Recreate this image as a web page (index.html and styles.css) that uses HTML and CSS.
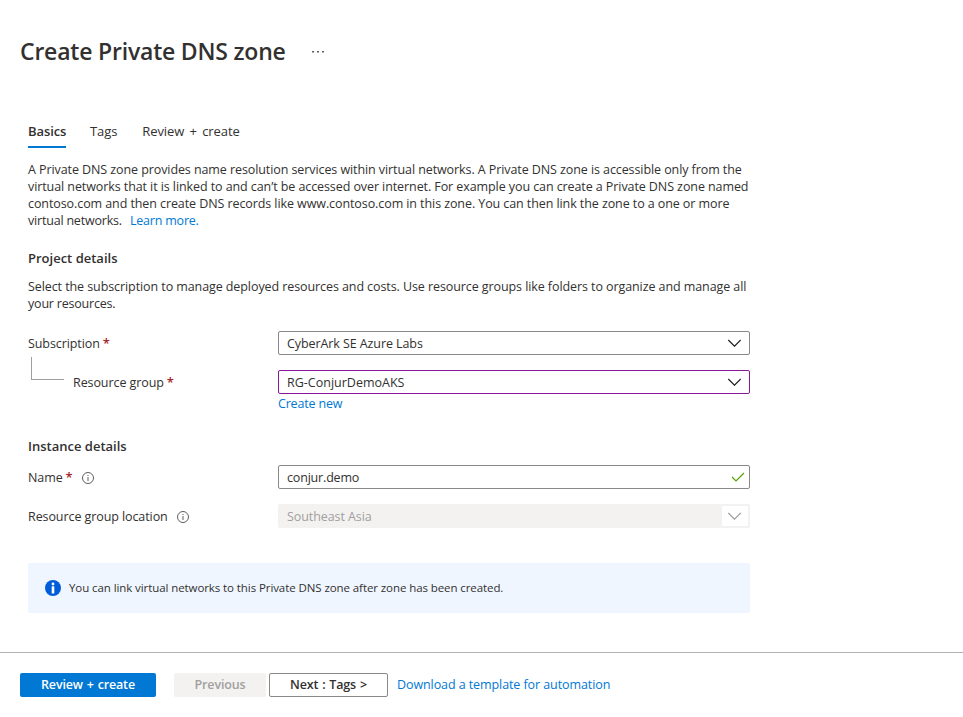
FILE: index.html
```html
<!DOCTYPE html>
<html lang="en">
<head>
<meta charset="utf-8">
<title>Create Private DNS zone</title>
<link rel="stylesheet" href="styles.css">
</head>
<body>
<div class="page">
  <header class="header">
    <h1 class="title">Create Private DNS zone</h1>
    <svg class="more" width="14" height="4" viewBox="0 0 14 4"><path d="M1 1h2v1.500H1zM6 1h2v1.500H6zM11 1h2v1.500h-2z" fill="#605e5c"/></svg>
  </header>
  <main class="content">
    <nav class="tabs">
      <a class="tab active">Basics</a>
      <a class="tab">Tags</a>
      <a class="tab">Review + create</a>
    </nav>
    <p class="text intro">
      <span class="line">A Private DNS zone provides name resolution services within virtual networks. A Private DNS zone is accessible only from the</span>
      <span class="line">virtual networks that it is linked to and can’t be accessed over internet. For example you can create a Private DNS zone named</span>
      <span class="line">contoso.com and then create DNS records like www.contoso.com in this zone. You can then link the zone to a one or more</span>
      <span class="line tight">virtual networks. <a class="link learn">Learn more.</a></span>
    </p>
    <h2 class="section">Project details</h2>
    <p class="text details">
      <span class="line">Select the subscription to manage deployed resources and costs. Use resource groups like folders to organize and manage all</span>
      <span class="line tight">your resources.</span>
    </p>
    <div class="row">
      <label class="label">Subscription<span class="req">*</span></label>
      <div class="field"><span>CyberArk SE Azure Labs</span>
        <svg class="chev" width="14" height="8" viewBox="0 0 14 8"><path d="M1.300 1 7.500 7.200 13.700 1"/></svg></div>
    </div>
    <div class="row row-group">
      <span class="elbow"></span>
      <label class="label nested">Resource group<span class="req">*</span></label>
      <div class="field changed"><span>RG-ConjurDemoAKS</span>
        <svg class="chev" width="14" height="8" viewBox="0 0 14 8"><path d="M1.300 1 7.500 7.200 13.700 1"/></svg></div>
    </div>
    <a class="link create-new">Create new</a>
    <h2 class="section instance">Instance details</h2>
    <div class="row">
      <label class="label">Name<span class="req">*</span>
        <svg class="info" width="12" height="12" viewBox="0 0 12 12"><circle cx="6" cy="6" r="5.500"/><path d="M6 5v4M6 3v1"/></svg></label>
      <div class="field valid"><span>conjur.demo</span>
        <svg class="check" width="14" height="10" viewBox="0 0 14 10"><path d="M1 5l4 4 8-8"/></svg></div>
    </div>
    <div class="row row-location">
      <label class="label">Resource group location
        <svg class="info" width="12" height="12" viewBox="0 0 12 12"><circle cx="6" cy="6" r="5.500"/><path d="M6 5v4M6 3v1"/></svg></label>
      <div class="field disabled"><span>Southeast Asia</span>
        <span class="chev-box"><svg class="chev" width="14" height="8" viewBox="0 0 14 8"><path d="M1.300 1 7.500 7.200 13.700 1"/></svg></span></div>
    </div>
    <div class="notice">
      <svg width="16" height="16" viewBox="0 0 16 16"><circle cx="8" cy="8" r="8" fill="#015cda"/><circle cx="8" cy="4" r="1.400" fill="#fff"/><path d="M6.700 6.300h2.600V13.500H6.700z" fill="#fff"/></svg>
      <span class="notice-text">You can link virtual networks to this Private DNS zone after zone has been created.</span>
    </div>
  </main>
  <footer class="footer">
    <button class="btn primary">Review + create</button>
    <button class="btn off" disabled>Previous</button>
    <button class="btn next">Next : Tags &gt;</button>
    <a class="link download">Download a template for automation</a>
  </footer>
</div>
</body>
</html>
```
FILE: styles.css
```css
* { box-sizing: border-box; }
body {
  margin: 0;
  background: #fff;
  color: #323130;
  font: 12.5px/17px "Open Sans", "Noto Sans", sans-serif;
  letter-spacing: -0.085px;
}
.page { height: 717px; display: flex; flex-direction: column; overflow: hidden; }
h1, h2, p { margin: 0; }
span { white-space: nowrap; }

.header { height: 118px; padding: 36px 0 0 20px; display: flex; align-items: flex-start; }
.title { width: 291px; font-size: 23px; line-height: 31px; font-weight: 600; letter-spacing: -0.2px; white-space: nowrap; }
.more { margin-top: 14px; }

.content { flex: 1; width: 750px; padding-left: 28px; }
.tabs { display: flex; height: 30px; font-size: 13px; }
.tab { height: 30px; padding-top: 5px; margin-right: 25px; word-spacing: 2px; }
.tab.active { width: 38px; margin-right: 24px; font-weight: 600; border-bottom: 2px solid #0078d4; }
.text { margin-top: 13px; }
.line { display: block; }
.tight { letter-spacing: -0.2px; }
.link { color: #0078d4; }
.learn { margin-left: 5px; }
.section { margin-top: 21px; font-size: 13px; line-height: 17px; font-weight: 600; letter-spacing: 0; }
.details { margin-top: 11px; }
.row { display: flex; height: 24px; margin-top: 19px; }
.label { width: 250px; display: flex; align-items: center; }
.req { color: #a4262c; margin-left: 3px; font-size: 13px; font-weight: 600; }
.info { margin-left: 9px; margin-top: 1px; fill: none; stroke: #605e5c; stroke-width: 1; }
.field {
  width: 472px;
  height: 24px;
  padding: 0 8px;
  border: 1px solid #8a8886;
  border-radius: 2px;
  display: flex;
  align-items: center;
  justify-content: space-between;
}
.chev { fill: none; stroke: #201f1e; stroke-width: 1.2; }
.check { fill: none; stroke: #57a300; stroke-width: 1.2; margin-right: -4px; }
.valid { letter-spacing: -0.18px; }
.changed { border-color: #881798; letter-spacing: 0; }
.row-group { margin-top: 15px; }
.elbow { width: 33px; height: 23px; margin: -13px 9px 0 3px; border: solid #a19f9d; border-width: 0 0 1px 1px; }
.nested { width: 205px; }
.create-new { display: block; margin: 1px 0 0 250px; letter-spacing: -0.18px; }
.instance { margin-top: 26px; }
.instance + .row { margin-top: 10px; }
.row-location { margin-top: 15px; }
.disabled { background: #f3f2f1; border-color: #f3f2f1; color: #a19f9d; padding-right: 1px; }
.chev-box { width: 26px; height: 20px; padding-left: 5px; background: #fff; display: flex; align-items: center; }
.disabled .chev { stroke: #a19f9d; }
.notice {
  height: 50px;
  margin-top: 35px;
  padding-left: 17px;
  background: #f0f6ff;
  border-radius: 2px;
  display: flex;
  align-items: center;
  gap: 8px;
  font-size: 11.5px;
}
.notice-text { margin-bottom: 2px; }
.footer { height: 65px; padding: 20px 0 0 20px; border-top: 1px solid #b3b0ad; display: flex; }
.btn {
  width: 136px;
  height: 24px;
  padding: 0;
  border: 0;
  border-radius: 2px;
  font: 600 12.5px/22px "Open Sans", "Noto Sans", sans-serif;
  letter-spacing: -0.15px;
  word-spacing: 0.8px;
}
.primary { background: #0078d4; color: #fff; }
.off { width: 92px; margin-left: 18px; background: #f3f2f1; color: #a19f9d; }
.next { width: 119px; margin-left: 3px; background: #fff; border: 1px solid #8a8886; color: #323130; }
.download { margin: 3px 0 0 9px; }
```
